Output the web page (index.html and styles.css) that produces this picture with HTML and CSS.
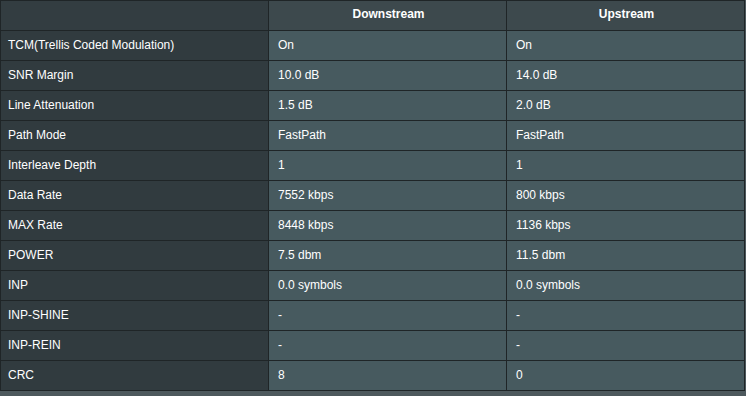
FILE: index.html
```html
<!DOCTYPE html>
<html>
<head>
<meta charset="utf-8">
<link rel="stylesheet" href="styles.css">
</head>
<body>
<table class="stats">
  <thead>
    <tr><th class="corner"></th><th class="head">Downstream</th><th class="head">Upstream</th></tr>
  </thead>
  <tbody>
    <tr><th>TCM(Trellis Coded Modulation)</th><td>On</td><td>On</td></tr>
    <tr><th>SNR Margin</th><td>10.0 dB</td><td>14.0 dB</td></tr>
    <tr><th>Line Attenuation</th><td>1.5 dB</td><td>2.0 dB</td></tr>
    <tr><th>Path Mode</th><td>FastPath</td><td>FastPath</td></tr>
    <tr><th>Interleave Depth</th><td>1</td><td>1</td></tr>
    <tr><th>Data Rate</th><td>7552 kbps</td><td>800 kbps</td></tr>
    <tr><th>MAX Rate</th><td>8448 kbps</td><td>1136 kbps</td></tr>
    <tr><th>POWER</th><td>7.5 dbm</td><td>11.5 dbm</td></tr>
    <tr><th>INP</th><td>0.0 symbols</td><td>0.0 symbols</td></tr>
    <tr><th>INP-SHINE</th><td>-</td><td>-</td></tr>
    <tr><th>INP-REIN</th><td>-</td><td>-</td></tr>
    <tr><th>CRC</th><td>8</td><td>0</td></tr>
  </tbody>
</table>
</body>
</html>
```

FILE: styles.css
```css
html, body {
  margin: 0;
  padding: 0;
  background: #4d595d;
}
body {
  font-family: "Liberation Sans", Arial, sans-serif;
  font-size: 12px;
  color: #ffffff;
}
.stats {
  border-collapse: collapse;
  width: 745px;
  table-layout: fixed;
}
.stats th,
.stats td {
  border: 1px solid #1f2527;
  height: 30px;
  padding: 0 0 2px 7px;
  text-align: left;
  font-weight: normal;
  box-sizing: border-box;
  vertical-align: middle;
}
.stats tbody th {
  background: #313b3f;
  width: 268px;
}
.stats td {
  background: #475a5f;
  padding-left: 9px;
}
.stats thead .corner {
  background: #333d41;
  width: 268px;
}
.stats thead .head {
  background: #3d494d;
  font-weight: bold;
  text-align: center;
  padding: 0 0 3px 2px;
}
```
